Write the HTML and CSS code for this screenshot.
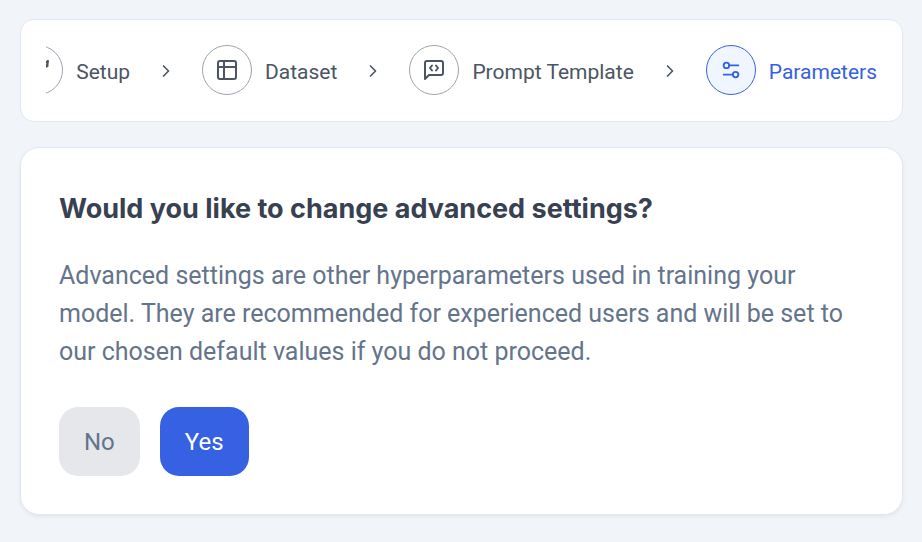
FILE: index.html
```html
<!DOCTYPE html>
<html lang="en">
<head>
<meta charset="utf-8">
<meta name="viewport" content="width=device-width, initial-scale=1">
<title>Parameters</title>
<link rel="stylesheet" href="styles.css">
</head>
<body>
<main class="page">
  <nav class="stepper" aria-label="Progress">
    <ol class="steps">
      <li class="step">
        <span class="step-icon"><svg class="icon" viewBox="0 0 24 24"><path d="M12 3L4 12h6l-2 9l8-9M19 4.500l3-1.500l-.5 3M19 6.500h2.500v1.500l-2.500 1.500"/></svg></span>
        <span class="step-label">Setup</span>
      </li>
      <li class="separator"><svg class="chevron" viewBox="0 0 24 24"><path d="M9 6l6 6l-6 6"/></svg></li>
      <li class="step">
        <span class="step-icon"><svg class="icon" viewBox="0 0 24 24"><rect x="3" y="3" width="18" height="18" rx="2"/><path d="M3 9h18M9 3v18"/></svg></span>
        <span class="step-label">Dataset</span>
      </li>
      <li class="separator"><svg class="chevron" viewBox="0 0 24 24"><path d="M9 6l6 6l-6 6"/></svg></li>
      <li class="step">
        <span class="step-icon"><svg class="icon" viewBox="0 0 24 24"><path d="M21 15a2 2 0 0 1-2 2H7l-4 4V5a2 2 0 0 1 2-2h14a2 2 0 0 1 2 2zM10 7.500L8 10l2 2.500M14 7.500l2 2.500l-2 2.500"/></svg></span>
        <span class="step-label">Prompt Template</span>
      </li>
      <li class="separator"><svg class="chevron" viewBox="0 0 24 24"><path d="M9 6l6 6l-6 6"/></svg></li>
      <li class="step current" aria-current="step">
        <span class="step-icon"><svg class="icon" viewBox="0 0 24 24"><circle cx="7" cy="7" r="3"/><circle cx="17" cy="17" r="3"/><path d="M10 7h10M4 17h10"/></svg></span>
        <span class="step-label">Parameters</span>
      </li>
    </ol>
  </nav>
  <section class="card">
    <h1 class="title">Would you like to change advanced settings?</h1>
    <p class="description">Advanced settings are other hyperparameters used in training your model. They are recommended for experienced users and will be set to our chosen default values if you do not proceed.</p>
    <div class="actions">
      <button class="button" type="button">No</button>
      <button class="button primary" type="button">Yes</button>
    </div>
  </section>
</main>
</body>
</html>
```
FILE: styles.css
```css
* {
  box-sizing: border-box;
}

body {
  margin: 0;
  background: #f1f5fa;
  font-family: Roboto, "Liberation Sans", sans-serif;
}

.page {
  display: flex;
  flex-direction: column;
  gap: 25px;
  padding: 19px 19px 26px 20px;
}

.stepper {
  padding: 25px 25px 26px;
  background: #fff;
  border: 1px solid #e5e7eb;
  border-radius: 14px;
}

/* The row is aligned to the current step; earlier steps are clipped. */
.steps {
  display: flex;
  justify-content: flex-end;
  align-items: center;
  gap: 26px;
  margin: 0;
  padding: 0;
  overflow: hidden;
  list-style: none;
  font-size: 21px;
  line-height: 32px;
  color: #4b5563;
  white-space: nowrap;
}

.step {
  display: flex;
  flex: none;
  align-items: center;
  gap: 13px;
}

.step-label {
  padding-top: 3px;
}

.separator {
  display: flex;
  flex: none;
  padding-top: 1px;
}

.step-icon {
  display: flex;
  flex: none;
  align-items: center;
  justify-content: center;
  width: 50px;
  height: 50px;
  border: 1px solid #9ca3af;
  border-radius: 50%;
}

.icon,
.chevron {
  width: 24px;
  height: 24px;
  fill: none;
  stroke: currentColor;
  stroke-width: 2;
  stroke-linecap: round;
  stroke-linejoin: round;
}

.chevron {
  width: 20px;
  height: 20px;
}

.current {
  color: #3661e3;
}

.current .step-icon {
  background: #eff6ff;
  border-color: #3661e3;
}

.current .icon {
  width: 22px;
  height: 22px;
}

.card {
  padding: 39px 38px 38px;
  background: #fff;
  border: 1px solid #e5e7eb;
  border-radius: 19px;
  box-shadow: 0 2px 4px rgba(15, 23, 42, 0.06);
}

.title {
  margin: 0 0 26px;
  font-family: Inter, "Liberation Sans", sans-serif;
  font-size: 27px;
  font-weight: 700;
  line-height: 44px;
  color: #374151;
}

.description {
  margin: 0 0 36px;
  font-size: 25px;
  line-height: 38px;
  color: #64748b;
}

.actions {
  display: flex;
  gap: 20px;
}

.button {
  padding: 17px 25px 15px;
  border: 0;
  border-radius: 19px;
  background: #e5e7eb;
  color: #64748b;
  font-family: inherit;
  font-size: 24px;
  line-height: 37px;
}

.primary {
  background: #3661e3;
  color: #fff;
}
```
